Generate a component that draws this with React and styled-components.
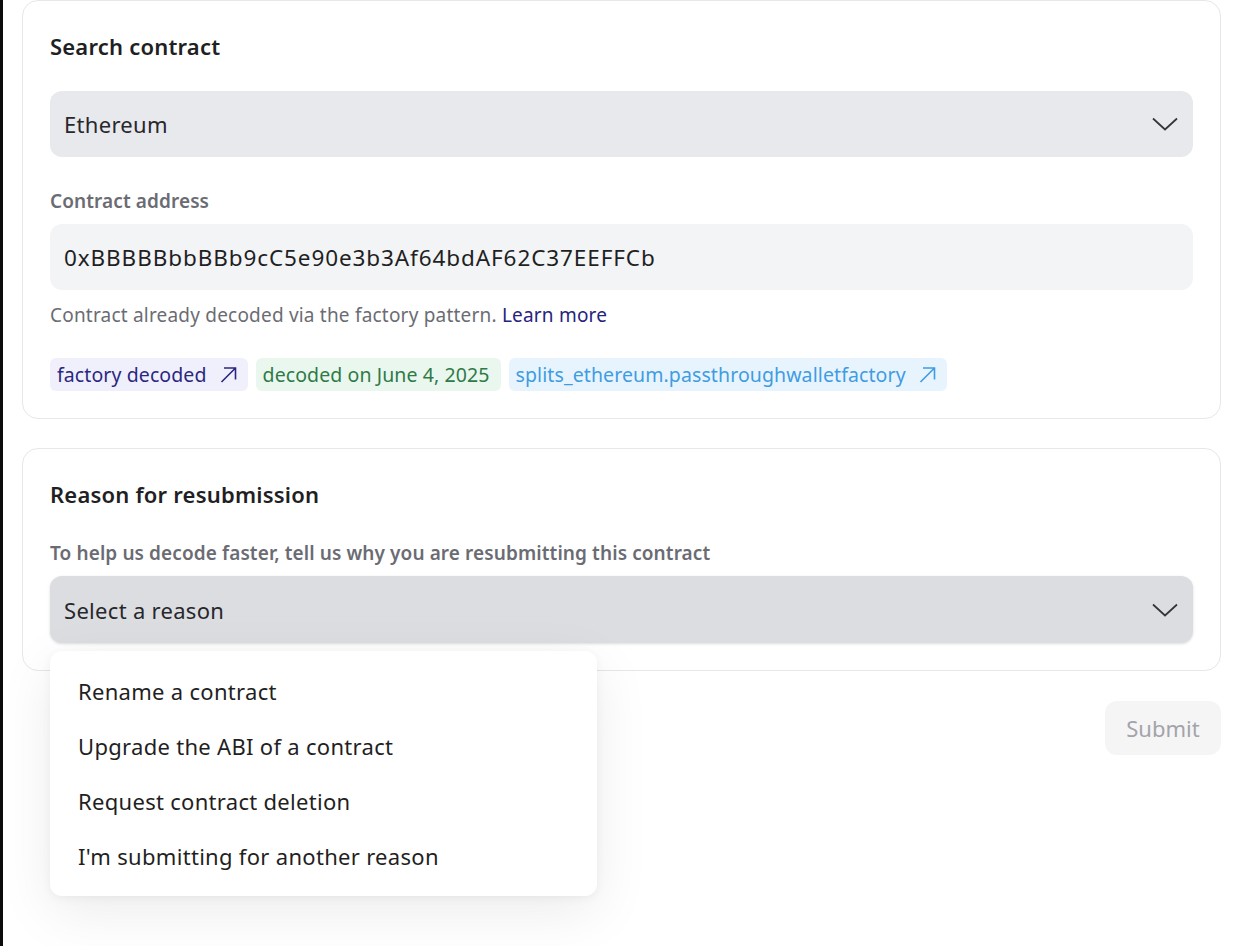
import styled, { createGlobalStyle } from 'styled-components';

const GlobalStyle = createGlobalStyle`
  html, body {
    margin: 0;
    background: #ffffff;
  }
  body {
    font-family: "Noto Sans", "Open Sans", sans-serif;
    color: #1f1f24;
  }
  * { box-sizing: border-box; }
`;

const Page = styled.div`
  min-height: 100vh;
  border-left: 3px solid #0b0b0b;
  padding: 0 23px 40px 19px;
  display: flex;
  flex-direction: column;
`;

const Card = styled.section`
  border: 1px solid #e6e7ea;
  border-radius: 16px;
  padding: 31px 27px 27px;
  display: flex;
  flex-direction: column;
  margin-top: ${(p) => p.$mt || 0}px;
`;

const Title = styled.h2`
  margin: 0 0 ${(p) => p.$mb}px;
  font-size: 22px;
  line-height: 28px;
  font-weight: 600;
  letter-spacing: 0.2px;
  color: #1f1f24;
`;

const Label = styled.div`
  margin: ${(p) => p.$mt || 0}px 0 11px;
  font-size: 19px;
  line-height: 24px;
  font-weight: 600;
  letter-spacing: 0.1px;
  color: #6b6c73;
`;

const SelectBox = styled.div`
  height: ${(p) => (p.$open ? 67 : 66)}px;
  border-radius: 12px;
  background: ${(p) => (p.$open ? '#dcdde1' : '#e8e9ed')};
  box-shadow: ${(p) => (p.$open ? '0 1px 3px rgba(0,0,0,0.14)' : 'none')};
  padding: 0 15px 0 14px;
  display: flex;
  align-items: center;
  justify-content: space-between;
  font-size: 22px;
  letter-spacing: 0.3px;
  color: #27272c;
`;

const InputBox = styled.div`
  height: 66px;
  border-radius: 12px;
  background: #f3f4f6;
  padding: 0 14px;
  display: flex;
  align-items: center;
  font-size: 22.5px;
  letter-spacing: 0.9px;
  color: #1f1f24;
`;

const Helper = styled.p`
  margin: 13px 0 31px;
  font-size: 19px;
  line-height: 24px;
  letter-spacing: 0.2px;
  color: #6b6c73;

  a {
    color: #27237c;
    text-decoration: none;
  }
`;

const Tags = styled.div`
  display: flex;
  gap: 8px;
`;

const tagTones = {
  indigo: { bg: '#f0f0fd', fg: '#2b2780' },
  green: { bg: '#eaf7ee', fg: '#2f7a47' },
  blue: { bg: '#e8f4fd', fg: '#3f9ce2' },
};

const Tag = styled.span`
  height: 33px;
  border-radius: 6px;
  padding: 0 11px 0 7px;
  display: inline-flex;
  align-items: center;
  gap: 13px;
  font-size: 19.5px;
  letter-spacing: 0.1px;
  background: ${(p) => tagTones[p.$tone].bg};
  color: ${(p) => tagTones[p.$tone].fg};
`;

const SelectWrap = styled.div`
  position: relative;
`;

const Menu = styled.ul`
  position: absolute;
  top: calc(100% + 8px);
  left: 0;
  width: 547px;
  margin: 0;
  padding: 12px 0 13px;
  list-style: none;
  background: #ffffff;
  border-radius: 12px;
  box-shadow: 0 16px 56px rgba(0, 0, 0, 0.08), 0 2px 10px rgba(0, 0, 0, 0.05);
  z-index: 2;
`;

const MenuItem = styled.li`
  height: 55px;
  padding: 0 28px;
  display: flex;
  align-items: center;
  font-size: 22px;
  letter-spacing: 0.3px;
  color: #1f1f24;
`;

const Actions = styled.div`
  margin-top: 30px;
  display: flex;
  justify-content: flex-end;
`;

const SubmitButton = styled.button`
  width: 116px;
  height: 54px;
  border: none;
  border-radius: 12px;
  background: #f5f5f6;
  color: #a3a4aa;
  font-family: inherit;
  font-size: 22px;
`;

function Chevron() {
  return (
    <svg width="26" height="14" viewBox="0 0 26 14" fill="none">
      <polyline points="1,1.5 13,12.5 25,1.5" stroke="#34343a" strokeWidth="1.7" />
    </svg>
  );
}

function ArrowUpRight() {
  return (
    <svg width="17" height="16" viewBox="0 0 17 16" fill="none">
      <path d="M1.5 15 L15.5 1 M4 1 H15.5 V12.5" stroke="currentColor" strokeWidth="1.6" />
    </svg>
  );
}

const reasons = [
  'Rename a contract',
  'Upgrade the ABI of a contract',
  'Request contract deletion',
  "I'm submitting for another reason",
];

export default function App() {
  return (
    <>
      <GlobalStyle />
      <Page>
        <Card>
          <Title $mb={31}>Search contract</Title>
          <SelectBox>
            Ethereum
            <Chevron />
          </SelectBox>
          <Label $mt={32}>Contract address</Label>
          <InputBox>0xBBBBBbbBBb9cC5e90e3b3Af64bdAF62C37EEFFCb</InputBox>
          <Helper>
            Contract already decoded via the factory pattern. <a href="#learn">Learn more</a>
          </Helper>
          <Tags>
            <Tag $tone="indigo">
              factory decoded
              <ArrowUpRight />
            </Tag>
            <Tag $tone="green">decoded on June 4, 2025</Tag>
            <Tag $tone="blue">
              splits_ethereum.passthroughwalletfactory
              <ArrowUpRight />
            </Tag>
          </Tags>
        </Card>

        <Card $mt={29}>
          <Title $mb={33}>Reason for resubmission</Title>
          <Label>To help us decode faster, tell us why you are resubmitting this contract</Label>
          <SelectWrap>
            <SelectBox $open>
              Select a reason
              <Chevron />
            </SelectBox>
            <Menu>
              {reasons.map((r) => (
                <MenuItem key={r}>{r}</MenuItem>
              ))}
            </Menu>
          </SelectWrap>
        </Card>

        <Actions>
          <SubmitButton>Submit</SubmitButton>
        </Actions>
      </Page>
    </>
  );
}
